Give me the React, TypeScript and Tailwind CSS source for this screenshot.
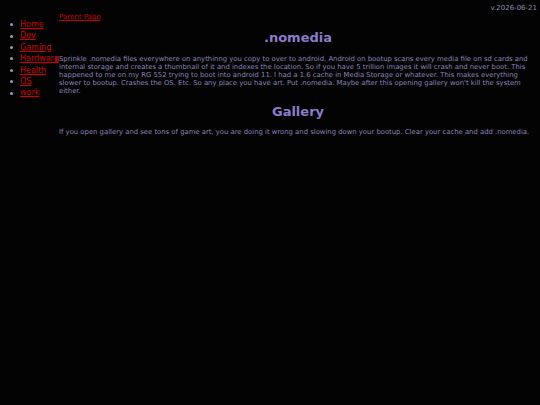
import React from "react";

const links = ["Home", "Dev", "Gaming", "Hardware", "Health", "OS", "work"];

export default function App() {
  return (
    <div
      className="min-h-screen w-full bg-[#030303] flex"
      style={{ fontFamily: '"DejaVu Sans", Verdana, sans-serif' }}
    >
      <div className="w-[59px] shrink-0 pt-[19px]">
        <ul className="list-none pl-[10px] text-[8px] leading-[11.4px] m-0">
          {links.map((l) => (
            <li key={l} className="flex items-center">
              <span className="w-[3px] h-[3px] rounded-full bg-[#9a96c0] mr-[7px] shrink-0" />
              <a href="#" className="text-[#d40000] underline">
                {l}
              </a>
            </li>
          ))}
        </ul>
      </div>
      <div className="flex-1 pr-[3px] text-[#8a84bc]">
        <div className="text-right text-[7px] leading-[9px] pt-[4px] text-[#8e8cb0]">v.2026-06-21</div>
        <div className="text-[7px] leading-[8px]">
          <a href="#" className="text-[#c80000] underline">
            Parent Page
          </a>
        </div>
        <h1 className="text-center font-bold text-[13px] leading-[16px] mt-[9px] mb-[9px] text-[#8c7ccc]">.nomedia</h1>
        <p className="relative text-[6.85px] leading-[8px] m-0">
          <span className="absolute left-[-4px] top-[1px] w-[4px] h-[6px] bg-[#8a1010]" />
          Sprinkle .nomedia files everywhere on anythinng you copy to over to android. Android on bootup scans every media file on sd cards and internal storage and creates a thumbnail of it and indexes the location. So if you have 5 trillion images it will crash and never boot. This happened to me on my RG 552 trying to boot into android 11. I had a 1.6 cache in Media Storage or whatever. This makes everything slower to bootup. Crashes the OS. Etc. So any place you have art. Put .nomedia. Maybe after this opening gallery won't kill the system either.
        </p>
        <h2 className="text-center font-bold text-[13px] leading-[16px] mt-[9px] mb-[8px] text-[#8c7ccc]">Gallery</h2>
        <p className="text-[6.85px] leading-[8px] m-0">
          If you open gallery and see tons of game art, you are doing it wrong and slowing down your bootup. Clear your cache and add .nomedia.
        </p>
      </div>
    </div>
  );
}
